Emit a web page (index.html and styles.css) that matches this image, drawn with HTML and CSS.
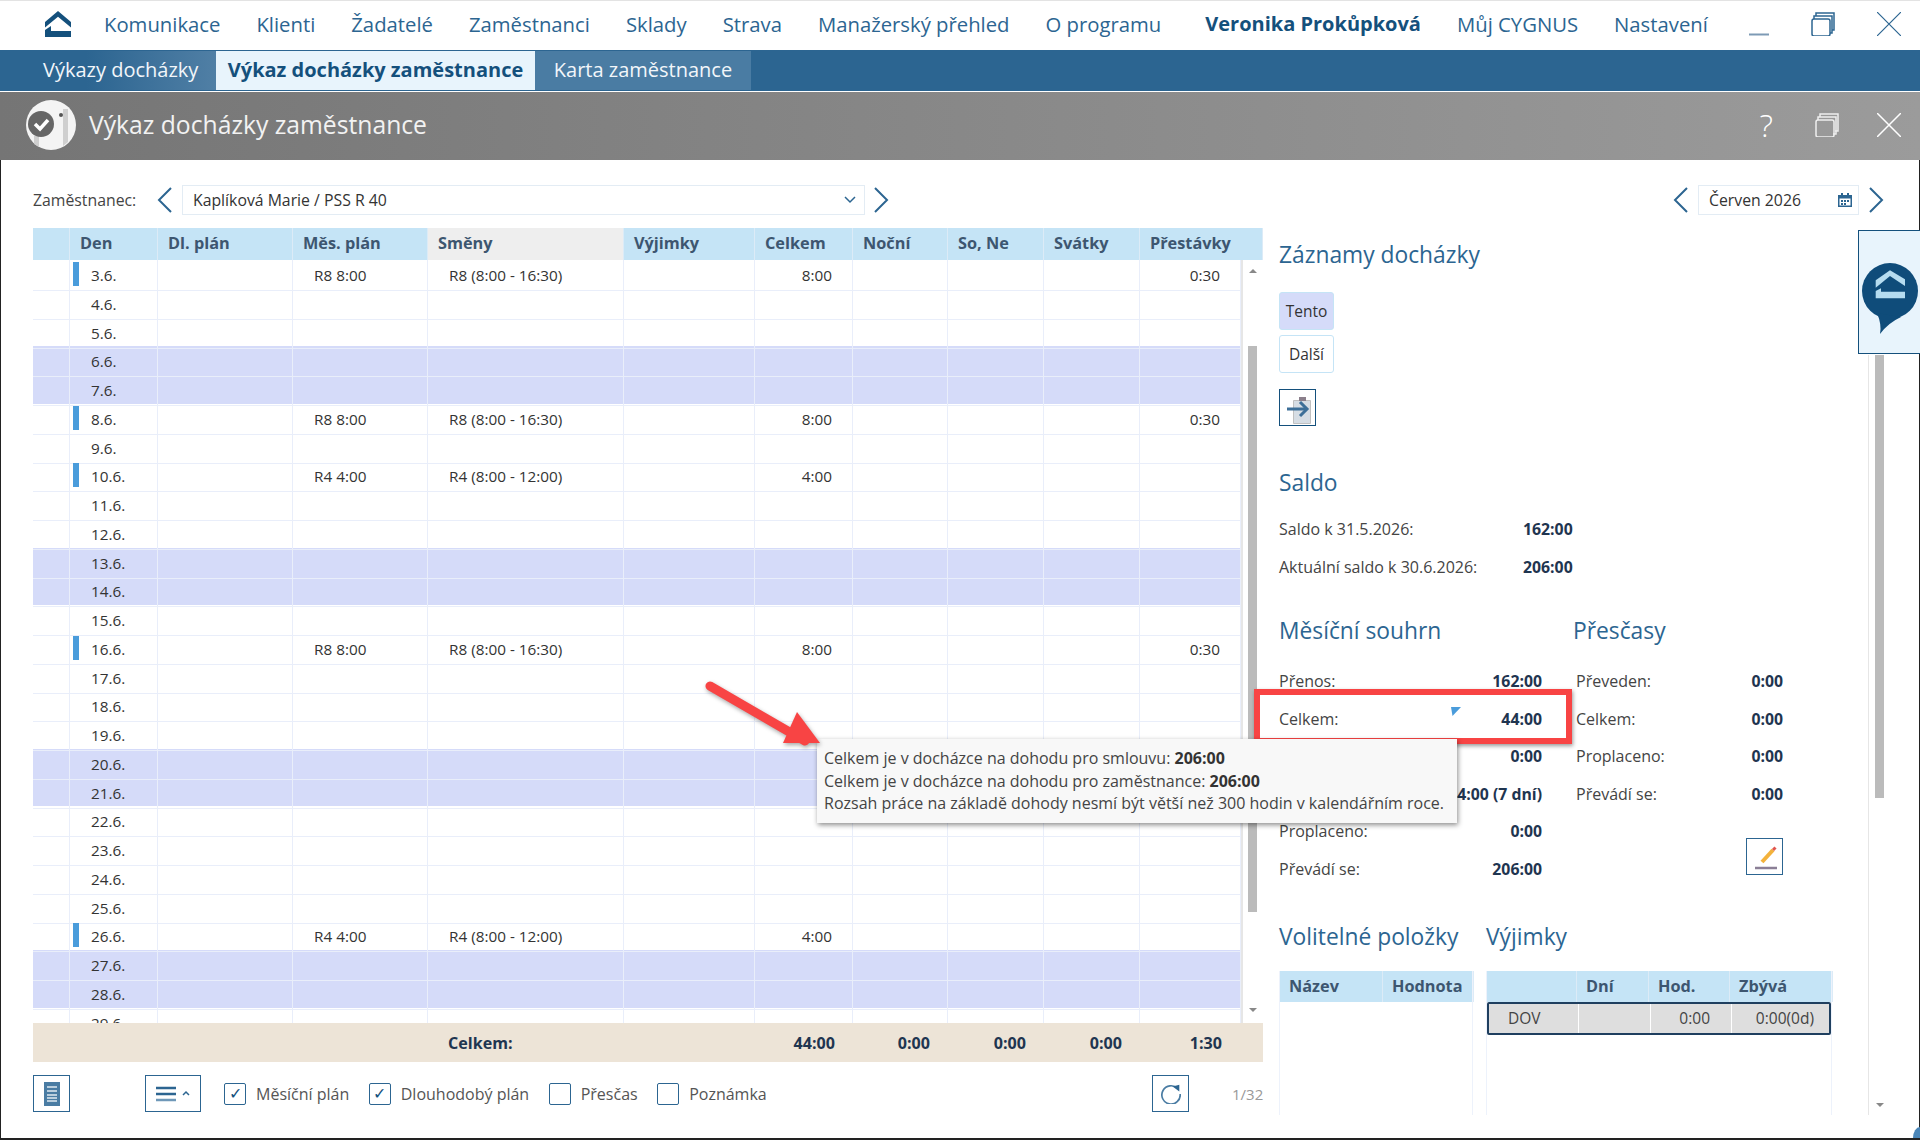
FILE: index.html
```html
<!DOCTYPE html>
<html lang="cs">
  <head>
    <meta charset="UTF-8" />
    <title>Výkaz docházky zaměstnance</title>
    <link rel="stylesheet" href="styles.css">
  </head>
  <body>
    <div class="app">
      <header class="topbar">
        <svg class="logo" viewBox="0 0 27 26"><path d="M13 0 26 11v5.500L13 5.700 0 16.500V11z" fill="#14507c"/><path d="M0 26v-7l6-4v5h20v6z" fill="#14507c"/></svg>
        <nav class="nav">
          <a>Komunikace</a><a>Klienti</a><a>Žadatelé</a><a>Zaměstnanci</a><a>Sklady</a><a>Strava</a><a>Manažerský přehled</a><a>O programu</a>
        </nav>
        <nav class="nav nav-user">
          <a class="user">Veronika Prokůpková</a><a>Můj CYGNUS</a><a>Nastavení</a>
        </nav>
        <div class="win-btns">
          <svg width="20" height="24" viewBox="0 0 20 24"><path d="M0 22.500h20" stroke="#7d9ab5" stroke-width="2"/></svg>
          <svg width="24" height="24" viewBox="0 0 24 24" fill="#fff" stroke="#2c6591" stroke-width="1.500"><path d="M5 4V1h18v17h-3"/><path d="M3 7V4h18v17h-3" /><rect x="1" y="7" width="18" height="17" rx="2"/></svg>
          <svg width="24" height="24" viewBox="0 0 24 24" stroke="#2c6591" stroke-width="1.200"><path d="M0 0l24 24M24 0 0 24"/></svg>
        </div>
      </header>

      <div class="tabbar">
        <a class="tab tab-first">Výkazy docházky</a>
        <a class="tab tab-active">Výkaz docházky zaměstnance</a>
        <a class="tab tab-last">Karta zaměstnance</a>
      </div>

      <div class="titlebar">
        <svg class="title-icon" viewBox="0 0 50 50"><circle cx="25" cy="25" r="25" fill="#f4f4f4"/><path d="M37 9h5v33l-5 4zM8 36h5v11l-5-3z" fill="#cfcfcf"/><circle cx="15" cy="24" r="13" fill="#666"/><path d="m9 24 5 5 8-9" fill="none" stroke="#fff" stroke-width="3.500"/><circle cx="35" cy="15" r="2" fill="#555"/></svg>
        <h1>Výkaz docházky zaměstnance</h1>
        <div class="title-btns">
          <span class="help">?</span>
          <svg width="24" height="24" viewBox="0 0 24 24" fill="none" stroke="#eee" stroke-width="1.500"><path d="M5 4V1h18v17h-3"/><path d="M3 7V4h18v17h-3"/><rect x="1" y="7" width="18" height="17" rx="2"/></svg>
          <svg width="24" height="24" viewBox="0 0 24 24" stroke="#fff" stroke-width="1.500"><path d="M0 0l24 24M24 0 0 24"/></svg>
        </div>
      </div>

      <main class="content">
        <section class="main">
          <div class="filter">
            <label>Zaměstnanec:</label>
            <svg class="chev" viewBox="0 0 16 26"><path d="M14 1 2 13l12 12"/></svg>
            <div class="select">Kaplíková Marie / PSS R 40
              <svg width="12" height="8" viewBox="0 0 12 8" fill="none" stroke="#2c6591" stroke-width="1.500"><path d="m1 1 5 5 5-5"/></svg>
            </div>
            <svg class="chev" viewBox="0 0 16 26"><path d="m2 1 12 12L2 25"/></svg>
            <div class="month-picker">
              <svg class="chev" viewBox="0 0 16 26"><path d="M14 1 2 13l12 12"/></svg>
              <div class="month">Červen 2026
                <svg width="14" height="14" viewBox="0 0 14 14"><path d="M0 2h14v12H0z" fill="#2c6591"/><path d="M1.500 5.500h11v7h-11z" fill="#fff"/><path d="M3 0h2v3H3zM9 0h2v3H9zM3 7h2v2H3zM6 7h2v2H6zM9 7h2v2H9zM3 10h2v2H3zM6 10h2v2H6z" fill="#2c6591"/></svg>
              </div>
              <svg class="chev" viewBox="0 0 16 26"><path d="m2 1 12 12L2 25"/></svg>
            </div>
          </div>

          <div class="grid">
            <div class="row row-head">
              <span></span><span>Den</span><span>Dl. plán</span><span>Měs. plán</span><span class="sorted">Směny</span><span>Výjimky</span><span>Celkem</span><span>Noční</span><span>So, Ne</span><span>Svátky</span><span>Přestávky</span>
            </div>
            <div class="grid-body">
              <div class="rows">
                <div class="row work"><span></span><span>3.6.</span><span></span><span>R8 8:00</span><span>R8 (8:00 - 16:30)</span><span></span><span class="num">8:00</span><span></span><span></span><span></span><span class="num">0:30</span></div>
                <div class="row"><span></span><span>4.6.</span><span></span><span></span><span></span><span></span><span></span><span></span><span></span><span></span><span></span></div>
                <div class="row"><span></span><span>5.6.</span><span></span><span></span><span></span><span></span><span></span><span></span><span></span><span></span><span></span></div>
                <div class="row weekend"><span></span><span>6.6.</span><span></span><span></span><span></span><span></span><span></span><span></span><span></span><span></span><span></span></div>
                <div class="row weekend"><span></span><span>7.6.</span><span></span><span></span><span></span><span></span><span></span><span></span><span></span><span></span><span></span></div>
                <div class="row work"><span></span><span>8.6.</span><span></span><span>R8 8:00</span><span>R8 (8:00 - 16:30)</span><span></span><span class="num">8:00</span><span></span><span></span><span></span><span class="num">0:30</span></div>
                <div class="row"><span></span><span>9.6.</span><span></span><span></span><span></span><span></span><span></span><span></span><span></span><span></span><span></span></div>
                <div class="row work"><span></span><span>10.6.</span><span></span><span>R4 4:00</span><span>R4 (8:00 - 12:00)</span><span></span><span class="num">4:00</span><span></span><span></span><span></span><span></span></div>
                <div class="row"><span></span><span>11.6.</span><span></span><span></span><span></span><span></span><span></span><span></span><span></span><span></span><span></span></div>
                <div class="row"><span></span><span>12.6.</span><span></span><span></span><span></span><span></span><span></span><span></span><span></span><span></span><span></span></div>
                <div class="row weekend"><span></span><span>13.6.</span><span></span><span></span><span></span><span></span><span></span><span></span><span></span><span></span><span></span></div>
                <div class="row weekend"><span></span><span>14.6.</span><span></span><span></span><span></span><span></span><span></span><span></span><span></span><span></span><span></span></div>
                <div class="row"><span></span><span>15.6.</span><span></span><span></span><span></span><span></span><span></span><span></span><span></span><span></span><span></span></div>
                <div class="row work"><span></span><span>16.6.</span><span></span><span>R8 8:00</span><span>R8 (8:00 - 16:30)</span><span></span><span class="num">8:00</span><span></span><span></span><span></span><span class="num">0:30</span></div>
                <div class="row"><span></span><span>17.6.</span><span></span><span></span><span></span><span></span><span></span><span></span><span></span><span></span><span></span></div>
                <div class="row"><span></span><span>18.6.</span><span></span><span></span><span></span><span></span><span></span><span></span><span></span><span></span><span></span></div>
                <div class="row"><span></span><span>19.6.</span><span></span><span></span><span></span><span></span><span></span><span></span><span></span><span></span><span></span></div>
                <div class="row weekend"><span></span><span>20.6.</span><span></span><span></span><span></span><span></span><span></span><span></span><span></span><span></span><span></span></div>
                <div class="row weekend"><span></span><span>21.6.</span><span></span><span></span><span></span><span></span><span></span><span></span><span></span><span></span><span></span></div>
                <div class="row"><span></span><span>22.6.</span><span></span><span></span><span></span><span></span><span></span><span></span><span></span><span></span><span></span></div>
                <div class="row"><span></span><span>23.6.</span><span></span><span></span><span></span><span></span><span></span><span></span><span></span><span></span><span></span></div>
                <div class="row"><span></span><span>24.6.</span><span></span><span></span><span></span><span></span><span></span><span></span><span></span><span></span><span></span></div>
                <div class="row"><span></span><span>25.6.</span><span></span><span></span><span></span><span></span><span></span><span></span><span></span><span></span><span></span></div>
                <div class="row work"><span></span><span>26.6.</span><span></span><span>R4 4:00</span><span>R4 (8:00 - 12:00)</span><span></span><span class="num">4:00</span><span></span><span></span><span></span><span></span></div>
                <div class="row weekend"><span></span><span>27.6.</span><span></span><span></span><span></span><span></span><span></span><span></span><span></span><span></span><span></span></div>
                <div class="row weekend"><span></span><span>28.6.</span><span></span><span></span><span></span><span></span><span></span><span></span><span></span><span></span><span></span></div>
                <div class="row"><span></span><span>29.6.</span><span></span><span></span><span></span><span></span><span></span><span></span><span></span><span></span><span></span></div>
              </div>
              <div class="vscroll"><i class="arrow up"></i><b class="thumb"></b><i class="arrow down"></i></div>
            </div>
            <div class="row row-total">
              <span></span><span></span><span></span><span></span><span>Celkem:</span><span></span><span class="num">44:00</span><span class="num">0:00</span><span class="num">0:00</span><span class="num">0:00</span><span class="num">1:30</span>
            </div>
          </div>

          <div class="toolbar">
            <button class="icon-btn">
              <svg width="16" height="24" viewBox="0 0 16 24"><path d="M0 0h16v24H0z" fill="#4a7ca3"/><path d="M3 5h10M3 9h10M3 13h10M3 16h10M3 19h10" stroke="#dfe9f1" stroke-width="1.500"/></svg>
            </button>
            <button class="icon-btn menu-btn">
              <svg width="34" height="16" viewBox="0 0 34 16"><path d="M0 2h20M0 8h20" stroke="#2c6591" stroke-width="2.500"/><path d="M0 14h20" stroke="#6f98b8" stroke-width="2.500"/><path d="m27 9 3-3 3 3" fill="none" stroke="#2c6591" stroke-width="1.500"/></svg>
            </button>
            <label class="check on">Měsíční plán</label>
            <label class="check on">Dlouhodobý plán</label>
            <label class="check">Přesčas</label>
            <label class="check">Poznámka</label>
            <button class="icon-btn refresh">
              <svg width="20" height="20" viewBox="0 0 24 24" fill="none"><path d="M20 5.500A11 11 0 1 0 23 12" stroke="#4a7ca3" stroke-width="2"/><path d="m14 3 8 -2v8z" fill="#2c6591"/></svg>
            </button>
            <span class="pager">1/32</span>
          </div>
        </section>

        <aside class="side">
          <h2>Záznamy docházky</h2>
          <div class="rec-btns">
            <button class="rec rec-on">Tento</button>
            <button class="rec">Další</button>
            <button class="icon-btn">
              <svg width="35" height="35" viewBox="0 0 35 35"><path d="M13.500 10.500h17v23h-17z" fill="#d6dde4" stroke="#c0c0c0"/><path d="M19 7h7v4h-7z" fill="#8b7f8b"/><path d="M7 19h18" stroke="#3d6f98" stroke-width="3"/><path d="m20 12 7 7-7 7" fill="none" stroke="#3d6f98" stroke-width="3"/></svg>
            </button>
          </div>

          <h2 class="h-saldo">Saldo</h2>
          <dl class="saldo">
            <dt>Saldo k 31.5.2026:</dt><dd>162:00</dd>
            <dt>Aktuální saldo k 30.6.2026:</dt><dd>206:00</dd>
          </dl>

          <div class="summary">
            <div class="sum-col sum-month">
              <h2>Měsíční souhrn</h2>
              <dl class="sum">
                <dt>Přenos:</dt><dd>162:00</dd>
                <dt>Celkem:</dt><dd>44:00</dd>
                <dt></dt><dd>0:00</dd>
                <dt></dt><dd>44:00 (7 dní)</dd>
                <dt>Proplaceno:</dt><dd>0:00</dd>
                <dt>Převádí se:</dt><dd>206:00</dd>
              </dl>
            </div>
            <div class="sum-col sum-over">
              <h2>Přesčasy</h2>
              <dl class="sum">
                <dt>Převeden:</dt><dd>0:00</dd>
                <dt>Celkem:</dt><dd>0:00</dd>
                <dt>Proplaceno:</dt><dd>0:00</dd>
                <dt>Převádí se:</dt><dd>0:00</dd>
              </dl>
              <button class="icon-btn edit-btn">
                <svg width="35" height="35" viewBox="0 0 35 35"><path d="M15 23 26 11" stroke="#f3b23c" stroke-width="4"/><path d="m26 11 2.500-2.500" stroke="#e0564f" stroke-width="3"/><path d="M8 29h22" stroke="#8b7f96" stroke-width="2.500"/></svg>
              </button>
            </div>
          </div>

          <div class="lists">
            <div class="list list-opt">
              <h2>Volitelné položky</h2>
              <div class="mini">
                <div class="mini-head"><span>Název</span><span>Hodnota</span></div>
              </div>
            </div>
            <div class="list list-exc">
              <h2>Výjimky</h2>
              <div class="mini">
                <div class="mini-head"><span></span><span>Dní</span><span>Hod.</span><span>Zbývá</span></div>
                <div class="mini-row"><span>DOV</span><span></span><span class="num">0:00</span><span class="num">0:00(0d)</span></div>
              </div>
            </div>
          </div>

          <div class="side-scroll"><b class="thumb"></b><i class="arrow down"></i></div>
        </aside>
      </main>

      <!-- overlays -->
      <i class="flag"></i>
      <div class="red-box"></div>
      <div class="tooltip">
        <p>Celkem je v docházce na dohodu pro smlouvu: <b>206:00</b></p>
        <p>Celkem je v docházce na dohodu pro zaměstnance: <b>206:00</b></p>
        <p>Rozsah práce na základě dohody nesmí být větší než 300 hodin v kalendářním roce.</p>
      </div>
      <svg class="red-arrow" viewBox="0 0 130 75"><path d="M5 5 100 60" stroke="#f84444" stroke-width="9" stroke-linecap="round"/><path d="M92 31 115 62 78 62z" fill="#f84444"/></svg>
      <div class="help-widget">
        <svg width="56" height="71" viewBox="0 0 56 71"><circle cx="28" cy="28" r="28" fill="#0f4c7a"/><path d="M15 50q5 12 3 21 8-11 21-17z" fill="#0f4c7a"/><path d="M28 7.300 43 16.300V23L28 13 13.700 24.700v-7.400z" fill="#b5dcf0"/><path d="M13.700 35.300V28L19 25.300v3.400h24v6.600z" fill="#b5dcf0"/></svg>
      </div>
      <i class="corner"></i>
    </div>
  </body>
</html>
```

FILE: styles.css
```css
* {
  margin: 0;
  padding: 0;
  box-sizing: border-box;
}

body {
  font-family: "Open Sans", "Liberation Sans", sans-serif;
  color: #333;
  background: #fff;
  overflow: hidden;
}

button {
  font-family: inherit;
  background: #fff;
}

.app {
  position: relative;
  width: 1920px;
  height: 1140px;
  overflow: hidden;
}

/* top menu */
.topbar {
  display: flex;
  align-items: center;
  height: 50px;
  padding: 0 0 4px 45px;
  border-top: 1px solid #e3e3e3;
}

.logo {
  width: 27px;
  height: 26px;
  margin-right: 32px;
}

.nav {
  display: flex;
  gap: 36px;
  font-size: 20.3px;
  color: #2c6591;
}

.nav-user {
  margin-left: 44px;
}

.user {
  font-size: 20px;
  font-weight: 700;
  color: #14507c;
}

.win-btns {
  display: flex;
  gap: 42px;
  margin-left: auto;
  padding-right: 19px;
}

/* tabs */
.tabbar {
  display: flex;
  height: 41px;
  padding: 1px 0;
  background: #2c6591;
}

.tab {
  font-size: 20px;
  line-height: 38px;
  color: #f2f6fa;
}

.tab-first {
  width: 216px;
  padding-left: 43px;
  background: linear-gradient(90deg, #2c6591 40%, #507fa5);
}

.tab-active {
  width: 319px;
  text-align: center;
  font-weight: 700;
  color: #14507c;
  background: #e8f4fc;
}

.tab-last {
  width: 216px;
  text-align: center;
  background: #4a7ca3;
}

/* window title */
.titlebar {
  display: flex;
  align-items: center;
  height: 68px;
  margin-top: 1px;
  padding: 0 0 2px 26px;
  background: linear-gradient(90deg, #757575, #9b9b9b);
  color: #f2f2f2;
}

.title-icon {
  width: 50px;
  height: 50px;
  margin-right: 13px;
}

.titlebar h1 {
  margin-bottom: 2px;
  font-size: 24.7px;
  font-weight: 400;
}

.title-btns {
  display: flex;
  align-items: center;
  gap: 38px;
  margin-left: auto;
  padding-right: 19px;
}

.help {
  margin-right: 4px;
  font-size: 32px;
  font-weight: 300;
  line-height: 30px;
  color: #fff;
}

/* window body */
.content {
  display: flex;
  height: 980px;
  border: solid #222;
  border-width: 0 1px 2px 1px;
}

.main {
  width: 1278px;
  padding-left: 32px;
}

.filter {
  display: flex;
  align-items: center;
  width: 1851px;
  height: 30px;
  margin-top: 25px;
  font-size: 15.800px;
}

.filter label {
  width: 124px;
  flex-shrink: 0;
  color: #444;
}

.chev {
  width: 16px;
  height: 26px;
  flex-shrink: 0;
  fill: none;
  stroke: #2c6591;
  stroke-width: 2;
}

.select,
.month {
  display: flex;
  align-items: center;
  justify-content: space-between;
  height: 30px;
  flex-shrink: 0;
  border: 1px solid #e3ecf4;
  color: #333;
}

.select {
  width: 683px;
  margin: 0 8px 0 9px;
  padding: 0 8px 0 10px;
}

.month-picker {
  display: flex;
  align-items: center;
  margin-left: auto;
}

.month {
  width: 161px;
  margin: 0 9px;
  padding: 0 6px 0 10px;
}

.grid {
  width: 1230px;
  margin-top: 13px;
}

.row {
  display: grid;
  grid-template-columns: 37px 88px 135px 135px 196px 131px 98px 95px 96px 96px 101px;
  height: 28.750px;
  font-size: 15.300px;
  line-height: 30px;
}

.row > span {
  border-right: 1px solid #e9eefa;
  border-bottom: 1px solid #e9eefa;
  padding-left: 21px;
  white-space: nowrap;
}

.row > span.num {
  padding: 0 20px 0 0;
  text-align: right;
}

.row-head {
  grid-template-columns: 37px 88px 135px 135px 196px 131px 98px 95px 96px 96px 123px;
  height: 32px;
  line-height: 30px;
  font-size: 16.300px;
  font-weight: 700;
  color: #3d5670;
  background: #c5e4f6;
}

.row-head > span {
  border-color: #dcebf7;
  border-bottom: 0;
  padding-left: 10px;
}

.row-head > span.sorted {
  background: #eee;
}

.work > span:nth-child(2) {
  position: relative;
}

.work > span:nth-child(2)::before {
  content: "";
  position: absolute;
  left: 3px;
  top: 2px;
  width: 6px;
  height: 24px;
  background: #4a9cdb;
}

.weekend {
  background: #d5dbf9;
}

.grid-body {
  display: flex;
  height: 763px;
  overflow: hidden;
}

.rows {
  width: 1208px;
}

.vscroll {
  position: relative;
  width: 22px;
  border-left: 2px solid #e6e6e6;
}

.thumb {
  display: block;
  position: absolute;
  width: 9px;
  background: #bbb;
}

.vscroll .thumb {
  left: 5px;
  top: 86px;
  height: 566px;
}

.arrow {
  position: absolute;
  left: 6px;
  border: 4px solid transparent;
}

.arrow.up {
  top: 5px;
  border-bottom-color: #888;
}

.arrow.down {
  bottom: 7px;
  border-top-color: #888;
}

.row-total {
  grid-template-columns: 37px 88px 135px 135px 196px 131px 98px 95px 96px 96px 123px;
  height: 39px;
  line-height: 40px;
  font-size: 16.100px;
  font-weight: 700;
  color: #1f3550;
  background: #ede4d7;
}

.row-total > span {
  border: 0;
  padding-left: 20px;
}

.row-total > span.num {
  padding-right: 18px;
}

.row-total > span:last-child.num {
  padding-right: 41px;
}

.toolbar {
  display: flex;
  align-items: center;
  width: 1230px;
  height: 37px;
  margin-top: 13px;
  font-size: 16px;
}

.icon-btn {
  display: inline-flex;
  align-items: center;
  justify-content: center;
  width: 37px;
  height: 37px;
  border: 1px solid #2c6591;
  flex-shrink: 0;
}

.menu-btn {
  width: 56px;
  margin: 0 23px 0 75px;
}

.check {
  display: flex;
  align-items: center;
  gap: 10px;
  margin-right: 19.500px;
  line-height: 24px;
  color: #555;
}

.check::before {
  content: "";
  width: 20px;
  height: 20px;
  border: 1px solid #2c6591;
  border-radius: 2px;
}

.check.on::before {
  content: "✓";
  font-size: 16px;
  line-height: 18px;
  text-align: center;
  color: #14507c;
}

.refresh {
  margin-left: auto;
  margin-right: 43px;
}

.pager {
  width: 31px;
  font-size: 15px;
  color: #999;
  white-space: nowrap;
}

/* right panel */
.side {
  position: relative;
  flex: 1;
  padding-top: 80px;
  color: #444;
  font-size: 16px;
}

.side h2 {
  font-size: 22.800px;
  font-weight: 400;
  line-height: 30px;
  color: #2c6591;
  white-space: nowrap;
}

.rec-btns {
  display: flex;
  flex-direction: column;
  align-items: flex-start;
  margin-top: 22px;
}

.rec {
  width: 55px;
  height: 38px;
  margin-bottom: 5px;
  border: 1px solid #c5e4f6;
  border-radius: 3px;
  font-size: 15.500px;
  color: #333;
}

.rec-on {
  background: #d5dbf9;
}

.rec-btns .icon-btn {
  margin-top: 11px;
  border-color: #14507c;
}

.side .h-saldo {
  margin-top: 42px;
}

dl {
  display: grid;
  line-height: 38px;
}

dd {
  font-size: 15.800px;
  font-weight: 700;
  color: #1f3550;
  text-align: right;
  white-space: nowrap;
}

.saldo {
  grid-template-columns: 244px 48px;
  margin-top: 12px;
}

.summary {
  display: flex;
  margin-top: 30px;
}

.sum-col .sum {
  margin-top: 17px;
  line-height: 37.500px;
}

.sum-month {
  width: 294px;
}

.sum-month .sum {
  grid-template-columns: 140px 123px;
}

.sum-over .sum {
  grid-template-columns: 130px 77px;
  padding-left: 3px;
}

.sum-over {
  position: relative;
}

.edit-btn {
  position: absolute;
  left: 173px;
  top: 222px;
}

.lists {
  display: flex;
  gap: 13px;
  margin-top: 34px;
}

.list-opt {
  width: 194px;
}

.list-exc {
  width: 346px;
}

.mini {
  height: 144px;
  margin-top: 19px;
  border: solid #edf2fb;
  border-width: 0 1px;
  font-size: 15.500px;
}

.mini-head,
.mini-row {
  display: grid;
  height: 31px;
}

.mini-head {
  line-height: 30px;
  font-size: 16.300px;
  font-weight: 700;
  color: #3d5670;
  background: #c5e4f6;
}

.mini-head span {
  padding-left: 9px;
  border-right: 1px solid #dcebf7;
}

.list-opt .mini-head {
  grid-template-columns: 103px 91px;
}

.list-exc .mini-head,
.mini-row {
  grid-template-columns: 90px 72px 81px 103px;
}

.mini-row {
  height: 33px;
  line-height: 28px;
  background: #dedede;
  border: 2px solid #1f3f5f;
  border-radius: 2px;
}

.mini-row span {
  padding-left: 19px;
  border-right: 1px solid #fff;
}

.mini-row span:last-child {
  border: 0;
}

.mini-row .num {
  padding: 0 21px 0 0;
  text-align: right;
}

.side-scroll {
  position: absolute;
  left: 589px;
  top: 195px;
  bottom: 23px;
  width: 50px;
  border-left: 1px solid #e6e6e6;
}

.side-scroll .thumb {
  left: 6px;
  top: 0;
  height: 443px;
}

.side-scroll .arrow {
  left: 7px;
  bottom: 4px;
}

/* overlays */
.flag {
  position: absolute;
  left: 1451px;
  top: 707px;
  width: 10px;
  height: 9px;
  background: #4a9cdb;
  clip-path: polygon(0 0, 100% 0, 15% 100%);
}

.red-box {
  position: absolute;
  left: 1254px;
  top: 689px;
  width: 318px;
  height: 55px;
  border: 6px solid #f84444;
  box-shadow: 1px 2px 4px rgba(0, 0, 0, 0.4);
}

.tooltip {
  position: absolute;
  left: 817px;
  top: 739px;
  width: 640px;
  height: 84px;
  padding: 8px 7px;
  background: #f8f8f8;
  box-shadow: 1px 2px 5px rgba(0, 0, 0, 0.45);
  font-size: 16px;
  line-height: 22.500px;
  color: #444;
  white-space: nowrap;
}

.tooltip b {
  color: #333;
}

.red-arrow {
  position: absolute;
  left: 705px;
  top: 681px;
  width: 130px;
  height: 75px;
  filter: drop-shadow(1px 2px 2px rgba(0, 0, 0, 0.35));
}

.help-widget {
  position: absolute;
  left: 1858px;
  top: 230px;
  width: 62px;
  height: 124px;
  padding: 32px 0 0 3px;
  background: #e8f4fc;
  border: 1px solid #14507c;
  border-right: 0;
}

.corner {
  position: absolute;
  right: 0;
  bottom: 2px;
  width: 7px;
  height: 11px;
  border-radius: 100% 0 0 0;
  background: #4a86b8;
}
```
